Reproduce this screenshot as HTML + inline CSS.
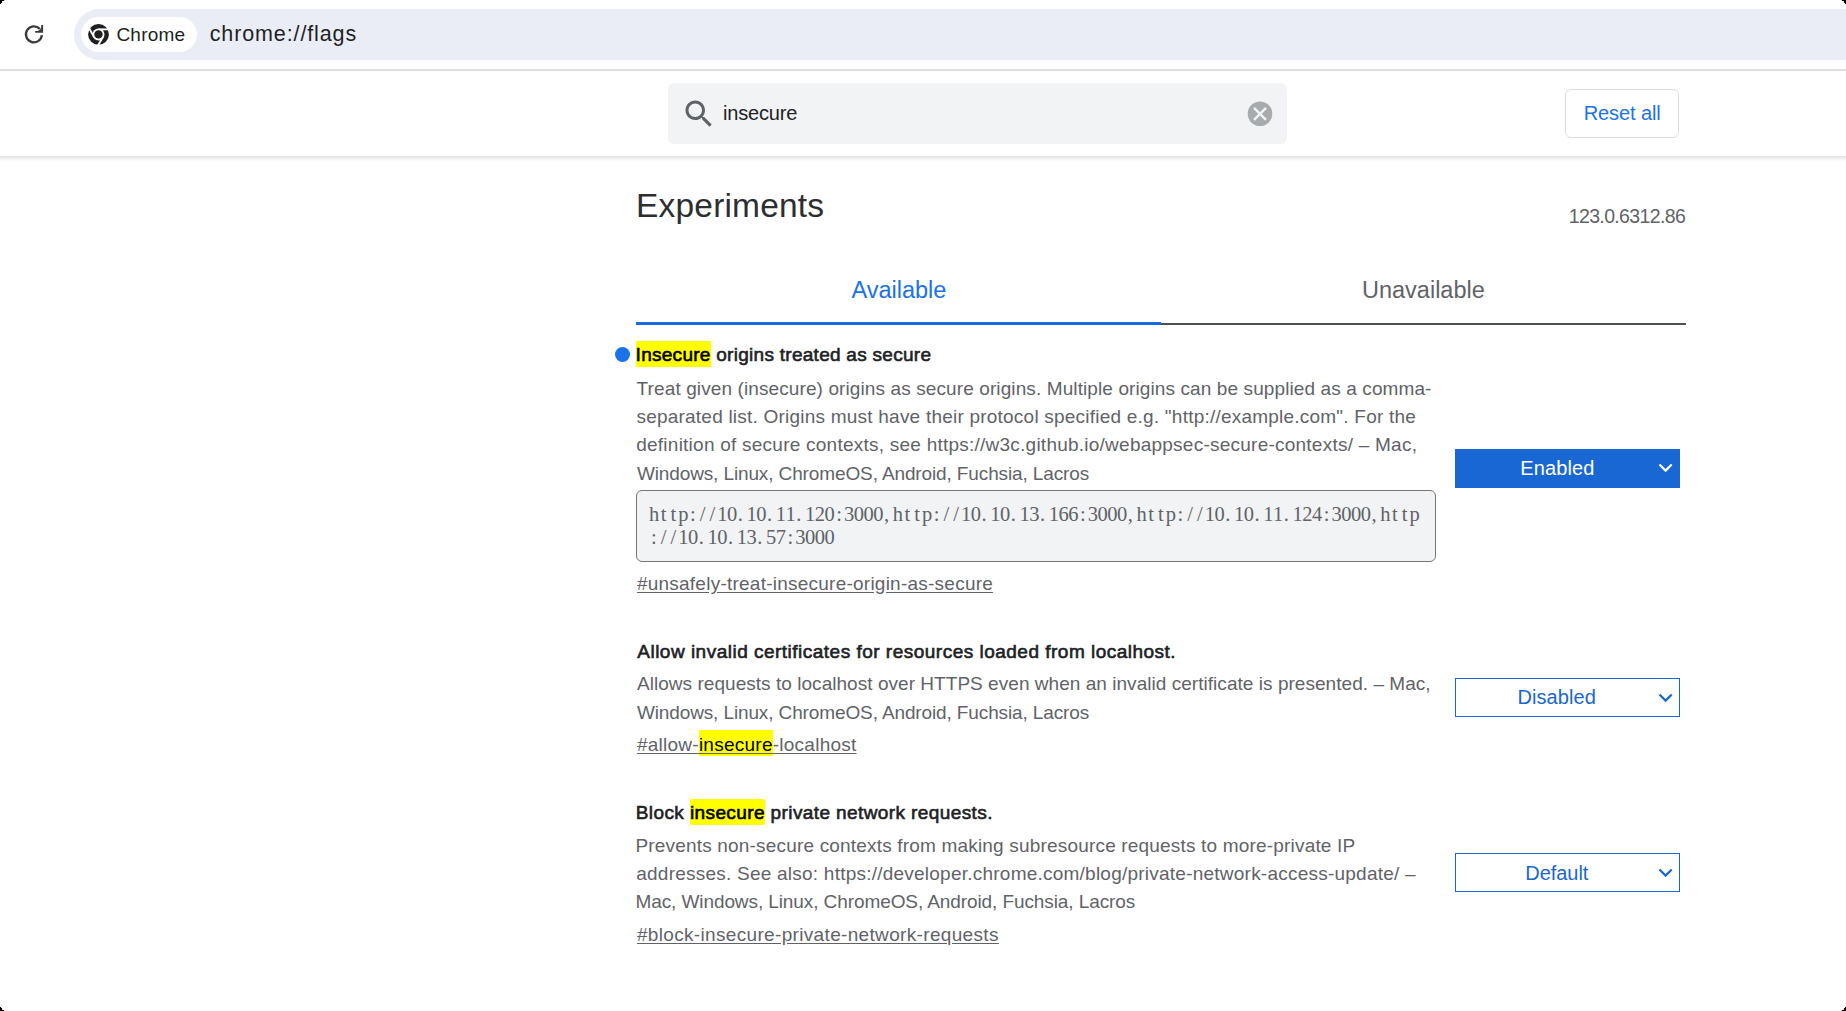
<!DOCTYPE html>
<html><head><meta charset="utf-8"><title>Experiments</title>
<style>
html,body{margin:0;padding:0;background:#fff;}
body{width:1846px;height:1011px;position:relative;overflow:hidden;font-family:'Liberation Sans',sans-serif;}
.t{position:absolute;white-space:pre;}
.hl{background:#ffff00;color:#000;padding:4px 0 1px;}
.hlt{background:#ffff00;color:#000;padding:3px 0 1.5px;}
.mono{font-family:'Liberation Serif',serif;}
.mono i{font-style:normal;display:inline-block;width:9.75px;text-align:center;}
.mono i.l{text-align:left;text-indent:1px;}
</style></head><body>
<div style="position:absolute;left:74px;top:9px;width:1800px;height:51px;border-radius:25.5px;background:#eaedf6"></div>
<div style="position:absolute;left:81px;top:17px;width:116px;height:35px;border-radius:17.5px;background:#fff"></div>
<div style="position:absolute;left:0;top:69px;width:1846px;height:2px;background:#dfe1df"></div>
<svg style="position:absolute;left:18px;top:18px" width="32" height="32" viewBox="0 0 32 32">
<path d="M23.9 17.2 A8 8 0 1 1 21.8 10.9" fill="none" stroke="#3c3c3c" stroke-width="2.3"/>
<path d="M17.2 13.85 L24.15 13.85 L24.15 7.1" fill="none" stroke="#3c3c3c" stroke-width="1.9"/>
<path d="M24.15 13.85 L19.5 13.85 L24.15 9.2 Z" fill="#3c3c3c"/>
</svg>
<svg style="position:absolute;left:84px;top:20px" width="30" height="30" viewBox="-14.5 -14.4 30 30">
<circle cx="0" cy="0" r="10.4" fill="#1f1f1f"/>
<circle cx="0" cy="0" r="6.0" fill="#fff"/>
<g stroke="#fff" stroke-width="1.9">
<line x1="0" y1="-5.05" x2="13" y2="-5.05"/>
<line x1="0" y1="-5.05" x2="13" y2="-5.05" transform="rotate(120)"/>
<line x1="0" y1="-5.05" x2="13" y2="-5.05" transform="rotate(240)"/>
</g>
<circle cx="0" cy="0" r="4.2" fill="#1f1f1f"/>
</svg>
<div class="t" style="left:116.45px;top:25.42px;font-size:19px;line-height:19px;color:#1f1f1f;font-family:'Liberation Sans', sans-serif;font-weight:400;letter-spacing:0.212px;">Chrome</div>
<div class="t" style="left:209.74px;top:23.60px;font-size:21.5px;line-height:21.5px;color:#1f1f1f;font-family:'Liberation Sans', sans-serif;font-weight:400;letter-spacing:0.876px;">chrome://flags</div>
<div style="position:absolute;left:0;top:156px;width:1846px;height:6px;background:linear-gradient(rgba(0,0,0,.115),rgba(0,0,0,.04) 55%,rgba(0,0,0,0))"></div>
<div style="position:absolute;left:668px;top:83px;width:619px;height:60.5px;border-radius:6px;background:#f1f3f4"></div>
<svg style="position:absolute;left:680.8px;top:96px" width="36" height="36" viewBox="0 0 24 24"><path fill="#5f6368" d="M15.5 14h-.79l-.28-.27C15.41 12.59 16 11.11 16 9.5 16 5.91 13.09 3 9.5 3S3 5.91 3 9.5 5.91 16 9.5 16c1.61 0 3.09-.59 4.23-1.57l.27.28v.79l5 4.99L20.49 19l-4.99-5zm-6 0C7.01 14 5 11.990 5 9.5S7.010 5 9.5 5 14 7.01 14 9.5 11.99 14 9.5 14z"/></svg>
<div class="t" style="left:722.90px;top:102.67px;font-size:20px;line-height:20px;color:#202124;font-family:'Liberation Sans', sans-serif;font-weight:400;letter-spacing:-0.143px;">insecure</div>
<svg style="position:absolute;left:1245px;top:101px" width="30" height="26" viewBox="0 0 30 26">
<circle cx="15" cy="12.8" r="12.3" fill="#a8abae"/>
<path d="M9 6.8 L21 18.8 M21 6.8 L9 18.8" stroke="#f1f3f4" stroke-width="2.4"/>
</svg>
<div style="position:absolute;left:1565px;top:89px;width:114px;height:49px;box-sizing:border-box;border:1.5px solid #dadce0;border-radius:6px"></div>
<div class="t" style="left:1583.70px;top:102.87px;font-size:20px;line-height:20px;color:#1a73e8;font-family:'Liberation Sans', sans-serif;font-weight:400;letter-spacing:-0.087px;">Reset all</div>
<div class="t" style="left:636.02px;top:189.14px;font-size:33.5px;line-height:33.5px;color:#2d2e31;font-family:'Liberation Sans', sans-serif;font-weight:400;letter-spacing:0.189px;">Experiments</div>
<div class="t" style="left:1568.74px;top:206.99px;font-size:19.5px;line-height:19.5px;color:#5f6368;font-family:'Liberation Sans', sans-serif;font-weight:400;letter-spacing:-0.638px;">123.0.6312.86</div>
<div class="t" style="left:851.40px;top:278.71px;font-size:23.5px;line-height:23.5px;color:#1a73e8;font-family:'Liberation Sans', sans-serif;font-weight:400;letter-spacing:0.002px;">Available</div>
<div class="t" style="left:1362.04px;top:278.71px;font-size:23.5px;line-height:23.5px;color:#5f6368;font-family:'Liberation Sans', sans-serif;font-weight:400;letter-spacing:-0.007px;">Unavailable</div>
<div style="position:absolute;left:636px;top:323px;width:1050px;height:2px;background:#4d5156"></div>
<div style="position:absolute;left:636px;top:322px;width:525px;height:3px;background:#1a6ae6"></div>
<div style="position:absolute;left:615px;top:347px;width:15px;height:15px;border-radius:50%;background:#1a73e8"></div>
<div class="t" style="left:635.58px;top:345.32px;font-size:19px;line-height:19px;color:#202124;font-family:'Liberation Sans', sans-serif;font-weight:400;letter-spacing:0.278px;-webkit-text-stroke-width:0.6px;"><span class="hlt">Insecure</span> origins treated as secure</div>
<div class="t" style="left:636.62px;top:378.52px;font-size:19px;line-height:19px;color:#5f6368;font-family:'Liberation Sans', sans-serif;font-weight:400;letter-spacing:0.106px;">Treat given (insecure) origins as secure origins. Multiple origins can be supplied as a comma-</div>
<div class="t" style="left:636.43px;top:406.92px;font-size:19px;line-height:19px;color:#5f6368;font-family:'Liberation Sans', sans-serif;font-weight:400;letter-spacing:0.221px;">separated list. Origins must have their protocol specified e.g. &quot;http://example.com&quot;. For the</div>
<div class="t" style="left:636.24px;top:435.32px;font-size:19px;line-height:19px;color:#5f6368;font-family:'Liberation Sans', sans-serif;font-weight:400;letter-spacing:0.240px;">definition of secure contexts, see https://w3c.github.io/webappsec-secure-contexts/ – Mac,</div>
<div class="t" style="left:636.90px;top:463.72px;font-size:19px;line-height:19px;color:#5f6368;font-family:'Liberation Sans', sans-serif;font-weight:400;letter-spacing:-0.121px;">Windows, Linux, ChromeOS, Android, Fuchsia, Lacros</div>
<div style="position:absolute;left:636px;top:490px;width:800px;height:72px;box-sizing:border-box;border:1.5px solid #767676;border-radius:6px;background:#f1f3f4"></div>
<div class="t mono" style="left:649.00px;top:503.83px;font-size:20.5px;line-height:20.5px;color:#5f6368"><i>h</i><i>t</i><i>t</i><i>p</i><i>:</i><i>/</i><i>/</i><i>1</i><i>0</i><i class="l">.</i><i>1</i><i>0</i><i class="l">.</i><i>1</i><i>1</i><i class="l">.</i><i>1</i><i>2</i><i>0</i><i>:</i><i>3</i><i>0</i><i>0</i><i>0</i><i class="l">,</i><i>h</i><i>t</i><i>t</i><i>p</i><i>:</i><i>/</i><i>/</i><i>1</i><i>0</i><i class="l">.</i><i>1</i><i>0</i><i class="l">.</i><i>1</i><i>3</i><i class="l">.</i><i>1</i><i>6</i><i>6</i><i>:</i><i>3</i><i>0</i><i>0</i><i>0</i><i class="l">,</i><i>h</i><i>t</i><i>t</i><i>p</i><i>:</i><i>/</i><i>/</i><i>1</i><i>0</i><i class="l">.</i><i>1</i><i>0</i><i class="l">.</i><i>1</i><i>1</i><i class="l">.</i><i>1</i><i>2</i><i>4</i><i>:</i><i>3</i><i>0</i><i>0</i><i>0</i><i class="l">,</i><i>h</i><i>t</i><i>t</i><i>p</i></div>
<div class="t mono" style="left:649.00px;top:526.83px;font-size:20.5px;line-height:20.5px;color:#5f6368"><i>:</i><i>/</i><i>/</i><i>1</i><i>0</i><i class="l">.</i><i>1</i><i>0</i><i class="l">.</i><i>1</i><i>3</i><i class="l">.</i><i>5</i><i>7</i><i>:</i><i>3</i><i>0</i><i>0</i><i>0</i></div>
<div class="t" style="left:636.90px;top:573.52px;font-size:19px;line-height:19px;color:#5f6368;font-family:'Liberation Sans', sans-serif;font-weight:400;letter-spacing:0.239px;text-decoration:underline;text-underline-offset:2px;">#unsafely-treat-insecure-origin-as-secure</div>
<div style="position:absolute;left:1455px;top:449px;width:225px;height:39px;background:#1967d2"></div>
<div class="t" style="left:1520.20px;top:458.17px;font-size:20px;line-height:20px;color:#fff;font-family:'Liberation Sans', sans-serif;font-weight:400;letter-spacing:0.150px;">Enabled</div>
<svg style="position:absolute;left:1655px;top:460px" width="22" height="16" viewBox="0 0 22 16"><path d="M4.5 4.5 L10.6 10.6 L16.7 4.5" fill="none" stroke="#fff" stroke-width="2.2"/></svg>
<div class="t" style="left:637.28px;top:641.82px;font-size:19px;line-height:19px;color:#202124;font-family:'Liberation Sans', sans-serif;font-weight:400;letter-spacing:0.491px;-webkit-text-stroke-width:0.6px;">Allow invalid certificates for resources loaded from localhost.</div>
<div class="t" style="left:637.00px;top:674.32px;font-size:19px;line-height:19px;color:#5f6368;font-family:'Liberation Sans', sans-serif;font-weight:400;letter-spacing:0.040px;">Allows requests to localhost over HTTPS even when an invalid certificate is presented. – Mac,</div>
<div class="t" style="left:636.90px;top:703.02px;font-size:19px;line-height:19px;color:#5f6368;font-family:'Liberation Sans', sans-serif;font-weight:400;letter-spacing:-0.121px;">Windows, Linux, ChromeOS, Android, Fuchsia, Lacros</div>
<div class="t" style="left:636.90px;top:734.92px;font-size:19px;line-height:19px;color:#5f6368;font-family:'Liberation Sans', sans-serif;font-weight:400;letter-spacing:0.255px;text-decoration:underline;text-underline-offset:2px;">#allow-<span class="hl">insecure</span>-localhost</div>
<div style="position:absolute;left:1455px;top:678px;width:225px;height:39px;box-sizing:border-box;border:1px solid #1967d2;background:#fff"></div>
<div class="t" style="left:1517.40px;top:686.97px;font-size:20px;line-height:20px;color:#1967d2;font-family:'Liberation Sans', sans-serif;font-weight:400;letter-spacing:0.100px;">Disabled</div>
<svg style="position:absolute;left:1655px;top:689px" width="22" height="16" viewBox="0 0 22 16"><path d="M4.5 5.5 L10.6 11.6 L16.7 5.5" fill="none" stroke="#1967d2" stroke-width="2.2"/></svg>
<div class="t" style="left:635.76px;top:803.42px;font-size:19px;line-height:19px;color:#202124;font-family:'Liberation Sans', sans-serif;font-weight:400;letter-spacing:0.400px;-webkit-text-stroke-width:0.6px;">Block <span class="hlt">insecure</span> private network requests.</div>
<div class="t" style="left:635.48px;top:836.42px;font-size:19px;line-height:19px;color:#5f6368;font-family:'Liberation Sans', sans-serif;font-weight:400;letter-spacing:0.181px;">Prevents non-secure contexts from making subresource requests to more-private IP</div>
<div class="t" style="left:636.24px;top:864.42px;font-size:19px;line-height:19px;color:#5f6368;font-family:'Liberation Sans', sans-serif;font-weight:400;letter-spacing:0.233px;">addresses. See also: https://developer.chrome.com/blog/private-network-access-update/ –</div>
<div class="t" style="left:635.48px;top:892.42px;font-size:19px;line-height:19px;color:#5f6368;font-family:'Liberation Sans', sans-serif;font-weight:400;letter-spacing:-0.092px;">Mac, Windows, Linux, ChromeOS, Android, Fuchsia, Lacros</div>
<div class="t" style="left:636.90px;top:925.22px;font-size:19px;line-height:19px;color:#5f6368;font-family:'Liberation Sans', sans-serif;font-weight:400;letter-spacing:0.336px;text-decoration:underline;text-underline-offset:2px;">#block-insecure-private-network-requests</div>
<div style="position:absolute;left:1455px;top:853px;width:225px;height:39px;box-sizing:border-box;border:1px solid #1967d2;background:#fff"></div>
<div class="t" style="left:1525.30px;top:862.87px;font-size:20px;line-height:20px;color:#1967d2;font-family:'Liberation Sans', sans-serif;font-weight:400;letter-spacing:-0.050px;">Default</div>
<svg style="position:absolute;left:1655px;top:864px" width="22" height="16" viewBox="0 0 22 16"><path d="M4.5 5.5 L10.6 11.6 L16.7 5.5" fill="none" stroke="#1967d2" stroke-width="2.2"/></svg>
<svg style="position:absolute;left:0;top:0" width="5" height="5"><path d="M0 0H4.2V1H2.1V3H1V4H0Z" fill="#000"/></svg>
<svg style="position:absolute;left:1841px;top:0" width="5" height="5"><path d="M5 0H0.8V1H2.9V3H4V4H5Z" fill="#000"/></svg>
<svg style="position:absolute;left:0;top:1006px" width="5" height="5"><path d="M0 5H4.2V4H2.1V2H1V1H0Z" fill="#000"/></svg>
<svg style="position:absolute;left:1841px;top:1006px" width="5" height="5"><path d="M5 5H0.8V4H2.9V2H4V1H5Z" fill="#000"/></svg>
</body></html>
